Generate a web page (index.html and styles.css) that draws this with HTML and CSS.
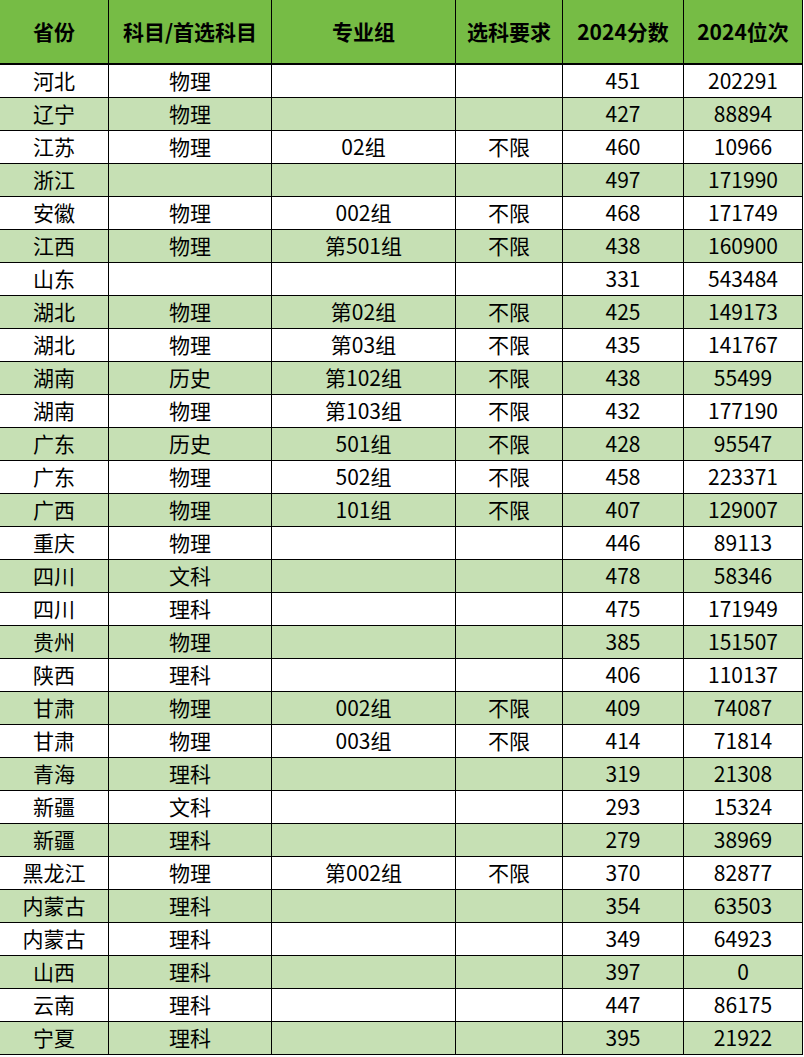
FILE: index.html
```html
<!DOCTYPE html>
<html lang="zh-CN">
<head>
<meta charset="utf-8">
<title>2024分数位次</title>
<link rel="stylesheet" href="styles.css">
</head>
<body>
<table class="score-table">
<colgroup>
<col class="c1"><col class="c2"><col class="c3"><col class="c4"><col class="c5"><col class="c6">
</colgroup>
<thead>
<tr><th>省份</th><th>科目/首选科目</th><th>专业组</th><th>选科要求</th><th>2024分数</th><th>2024位次</th></tr>
</thead>
<tbody>
<tr><td>河北</td><td>物理</td><td></td><td></td><td>451</td><td>202291</td></tr>
<tr class="alt"><td>辽宁</td><td>物理</td><td></td><td></td><td>427</td><td>88894</td></tr>
<tr><td>江苏</td><td>物理</td><td>02组</td><td>不限</td><td>460</td><td>10966</td></tr>
<tr class="alt"><td>浙江</td><td></td><td></td><td></td><td>497</td><td>171990</td></tr>
<tr><td>安徽</td><td>物理</td><td>002组</td><td>不限</td><td>468</td><td>171749</td></tr>
<tr class="alt"><td>江西</td><td>物理</td><td>第501组</td><td>不限</td><td>438</td><td>160900</td></tr>
<tr><td>山东</td><td></td><td></td><td></td><td>331</td><td>543484</td></tr>
<tr class="alt"><td>湖北</td><td>物理</td><td>第02组</td><td>不限</td><td>425</td><td>149173</td></tr>
<tr><td>湖北</td><td>物理</td><td>第03组</td><td>不限</td><td>435</td><td>141767</td></tr>
<tr class="alt"><td>湖南</td><td>历史</td><td>第102组</td><td>不限</td><td>438</td><td>55499</td></tr>
<tr><td>湖南</td><td>物理</td><td>第103组</td><td>不限</td><td>432</td><td>177190</td></tr>
<tr class="alt"><td>广东</td><td>历史</td><td>501组</td><td>不限</td><td>428</td><td>95547</td></tr>
<tr><td>广东</td><td>物理</td><td>502组</td><td>不限</td><td>458</td><td>223371</td></tr>
<tr class="alt"><td>广西</td><td>物理</td><td>101组</td><td>不限</td><td>407</td><td>129007</td></tr>
<tr><td>重庆</td><td>物理</td><td></td><td></td><td>446</td><td>89113</td></tr>
<tr class="alt"><td>四川</td><td>文科</td><td></td><td></td><td>478</td><td>58346</td></tr>
<tr><td>四川</td><td>理科</td><td></td><td></td><td>475</td><td>171949</td></tr>
<tr class="alt"><td>贵州</td><td>物理</td><td></td><td></td><td>385</td><td>151507</td></tr>
<tr><td>陕西</td><td>理科</td><td></td><td></td><td>406</td><td>110137</td></tr>
<tr class="alt"><td>甘肃</td><td>物理</td><td>002组</td><td>不限</td><td>409</td><td>74087</td></tr>
<tr><td>甘肃</td><td>物理</td><td>003组</td><td>不限</td><td>414</td><td>71814</td></tr>
<tr class="alt"><td>青海</td><td>理科</td><td></td><td></td><td>319</td><td>21308</td></tr>
<tr><td>新疆</td><td>文科</td><td></td><td></td><td>293</td><td>15324</td></tr>
<tr class="alt"><td>新疆</td><td>理科</td><td></td><td></td><td>279</td><td>38969</td></tr>
<tr><td>黑龙江</td><td>物理</td><td>第002组</td><td>不限</td><td>370</td><td>82877</td></tr>
<tr class="alt"><td>内蒙古</td><td>理科</td><td></td><td></td><td>354</td><td>63503</td></tr>
<tr><td>内蒙古</td><td>理科</td><td></td><td></td><td>349</td><td>64923</td></tr>
<tr class="alt"><td>山西</td><td>理科</td><td></td><td></td><td>397</td><td>0</td></tr>
<tr><td>云南</td><td>理科</td><td></td><td></td><td>447</td><td>86175</td></tr>
<tr class="alt"><td>宁夏</td><td>理科</td><td></td><td></td><td>395</td><td>21922</td></tr>
</tbody>
</table>
</body>
</html>
```
FILE: styles.css
```css
html, body {
  margin: 0;
  padding: 0;
  background: #ffffff;
}
.score-table {
  border-collapse: separate;
  border-spacing: 0;
  table-layout: fixed;
  width: 803px;
  font-family: "Noto Sans CJK SC", "Noto Sans", sans-serif;
  font-size: 21px;
  color: #000;
}
.c1 { width: 109px; }
.c2 { width: 163px; }
.c3 { width: 184px; }
.c4 { width: 107px; }
.c5 { width: 121px; }
.c6 { width: 119px; }
.score-table th,
.score-table td {
  box-sizing: border-box;
  padding: 0 0 2px;
  text-align: center;
  vertical-align: middle;
  border-right: 1px solid #000;
  border-bottom: 1px solid #000;
  line-height: 24px;
  white-space: nowrap;
  overflow: hidden;
}
.score-table thead tr {
  height: 65px;
}
.score-table th {
  background: #76bc45;
  font-weight: bold;
  border-bottom-width: 2px;
  padding-bottom: 1px;
}
.score-table tbody tr {
  height: 33px;
}
.score-table tbody tr.alt td {
  background: #c6e0b4;
}
```
